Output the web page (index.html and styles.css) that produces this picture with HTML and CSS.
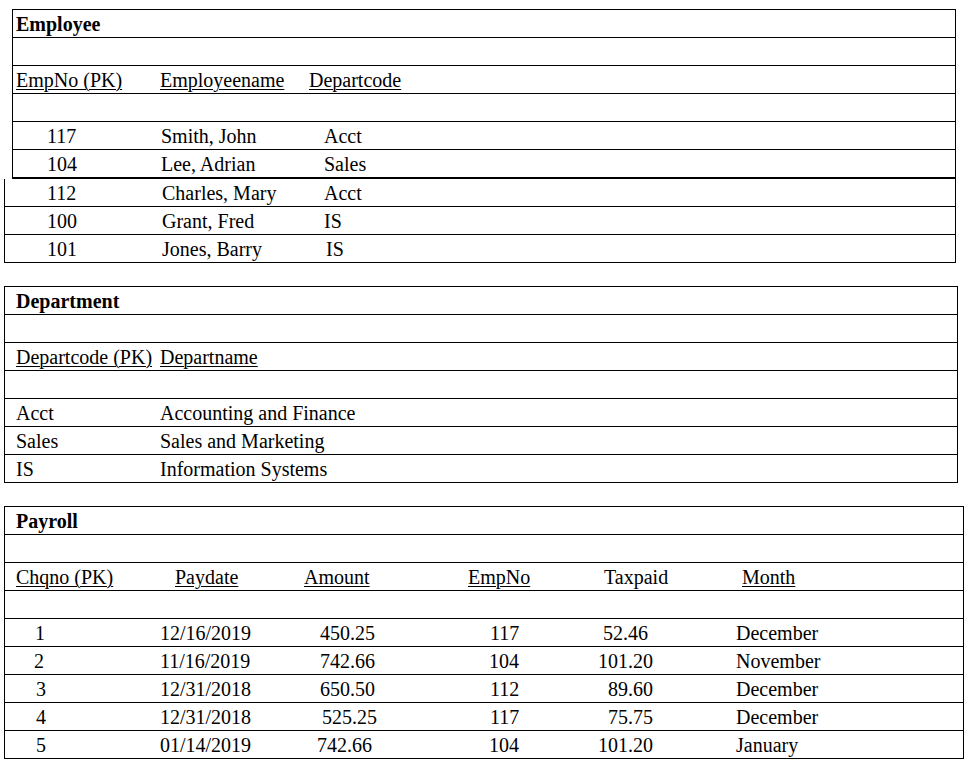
FILE: index.html
```html
<!DOCTYPE html>
<html lang="en">
<head>
<meta charset="utf-8">
<title>Tables</title>
<link rel="stylesheet" href="styles.css">
</head>
<body>
<main class="page">
  <section class="emp">
    <div class="box emp-top">
      <div class="row"><span class="title">Employee</span></div>
      <div class="row"></div>
      <div class="row">
        <span class="ec1"><u>EmpNo (PK)</u></span>
        <span class="ec2"><u>Employeename</u></span>
        <span class="ec3"><u>Departcode</u></span>
      </div>
      <div class="row"></div>
      <div class="row">
        <span class="ec1 d1">117</span><span class="ec2 d2">Smith, John</span><span class="ec3 d3">Acct</span>
      </div>
      <div class="row">
        <span class="ec1 d1">104</span><span class="ec2 d2">Lee, Adrian</span><span class="ec3 d3">Sales</span>
      </div>
    </div>
    <div class="box emp-bottom">
      <div class="row">
        <span class="ec1 d1">112</span><span class="ec2 d2b">Charles, Mary</span><span class="ec3 d3">Acct</span>
      </div>
      <div class="row">
        <span class="ec1 d1">100</span><span class="ec2 d2b">Grant, Fred</span><span class="ec3 d3">IS</span>
      </div>
      <div class="row">
        <span class="ec1 d1">101</span><span class="ec2 d2b">Jones, Barry</span><span class="ec3 d3b">IS</span>
      </div>
    </div>
  </section>

  <section class="box dept">
    <div class="row"><span class="title">Department</span></div>
    <div class="row"></div>
    <div class="row">
      <span class="dc1"><u>Departcode (PK)</u></span>
      <span class="dc2"><u>Departname</u></span>
    </div>
    <div class="row"></div>
    <div class="row"><span class="dc1">Acct</span><span class="dc2">Accounting and Finance</span></div>
    <div class="row"><span class="dc1">Sales</span><span class="dc2">Sales and Marketing</span></div>
    <div class="row"><span class="dc1">IS</span><span class="dc2">Information Systems</span></div>
  </section>

  <section class="box pay">
    <div class="row"><span class="title">Payroll</span></div>
    <div class="row"></div>
    <div class="row">
      <span class="pc1"><u>Chqno (PK)</u></span>
      <span class="pc2 h2"><u>Paydate</u></span>
      <span class="pc3 h3"><u>Amount</u></span>
      <span class="pc4 h4"><u>EmpNo</u></span>
      <span class="pc5 h5">Taxpaid</span>
      <span class="pc6 h6"><u>Month</u></span>
    </div>
    <div class="row"></div>
    <div class="row">
      <span class="pc1 q1">1</span><span class="pc2">12/16/2019</span><span class="pc3 amt">450.25</span>
      <span class="pc4 emp-no">117</span><span class="pc5 tax tax-short">52.46</span><span class="pc6 mon">December</span>
    </div>
    <div class="row">
      <span class="pc1 q1 q-left">2</span><span class="pc2">11/16/2019</span><span class="pc3 amt">742.66</span>
      <span class="pc4 emp-no emp-left">104</span><span class="pc5 tax">101.20</span><span class="pc6 mon">November</span>
    </div>
    <div class="row">
      <span class="pc1 q1 q-right">3</span><span class="pc2">12/31/2018</span><span class="pc3 amt">650.50</span>
      <span class="pc4 emp-no">112</span><span class="pc5 tax">89.60</span><span class="pc6 mon">December</span>
    </div>
    <div class="row">
      <span class="pc1 q1 q-right">4</span><span class="pc2">12/31/2018</span><span class="pc3 amt amt-far">525.25</span>
      <span class="pc4 emp-no">117</span><span class="pc5 tax">75.75</span><span class="pc6 mon">December</span>
    </div>
    <div class="row">
      <span class="pc1 q1 q-right">5</span><span class="pc2">01/14/2019</span><span class="pc3 amt amt-near">742.66</span>
      <span class="pc4 emp-no emp-left">104</span><span class="pc5 tax">101.20</span><span class="pc6 mon">January</span>
    </div>
  </section>
</main>
</body>
</html>
```

FILE: styles.css
```css
* {
  box-sizing: border-box;
}

html, body {
  margin: 0;
  padding: 0;
  background: #ffffff;
}

body {
  font-family: "Liberation Serif", "Times New Roman", serif;
  font-size: 20px;
  color: #000000;
}

.page {
  display: flex;
  flex-direction: column;
  align-items: flex-start;
  padding-top: 9px;
}

.box {
  border: 1px solid #000000;
  display: flex;
  flex-direction: column;
}

.row {
  box-sizing: content-box;
  height: 26px;
  padding-top: 1px;
  line-height: 27px;
  display: flex;
  white-space: nowrap;
}

.row + .row {
  border-top: 1px solid #000000;
}

.title {
  font-weight: bold;
}

u {
  text-decoration: underline;
  text-decoration-thickness: 1px;
  text-underline-offset: 2px;
}

/* Employee */
.emp {
  display: flex;
  flex-direction: column;
}

.emp-top {
  margin-left: 12px;
  width: 944px;
  border-bottom-width: 2px;
}

.emp-top .row {
  padding-left: 3px;
}

.emp-bottom {
  margin-left: 4px;
  width: 952px;
  border-top: none;
}

.emp-bottom .row {
  padding-left: 11px;
}

.ec1 { width: 144px; }
.ec2 { width: 149px; }
.ec3 { flex: 1; }

.d1 { padding-left: 31px; }
.d2 { padding-left: 1px; }
.d2b { padding-left: 2px; }
.d3 { padding-left: 15px; }
.d3b { padding-left: 17px; }

/* Department */
.dept {
  margin-top: 23px;
  margin-left: 4px;
  width: 954px;
}

.dept .row {
  padding-left: 11px;
}

.dc1 { width: 144px; }
.dc2 { flex: 1; }

/* Payroll */
.pay {
  margin-top: 23px;
  margin-left: 4px;
  width: 960px;
}

.pay .row {
  padding-left: 11px;
}

.pc1 { width: 144px; }
.pc2 { width: 140px; }
.pc3 { width: 160px; }
.pc4 { width: 135px; }
.pc5 { width: 135px; }
.pc6 { flex: 1; }

.h2 { padding-left: 15px; }
.h3 { padding-left: 4px; }
.h4 { padding-left: 8px; }
.h5 { padding-left: 9px; }
.h6 { padding-left: 12px; }

.q1 { padding-left: 19px; }
.q-left { padding-left: 18px; }
.q-right { padding-left: 20px; }

.amt {
  text-align: right;
  padding-right: 85px;
}
.amt-far { padding-right: 83px; }
.amt-near { padding-right: 88px; }

.emp-no { padding-left: 30px; }
.emp-left { padding-left: 29px; }

.tax {
  text-align: right;
  padding-right: 77px;
}
.tax-short { padding-right: 82px; }

.mon { padding-left: 6px; }
```
